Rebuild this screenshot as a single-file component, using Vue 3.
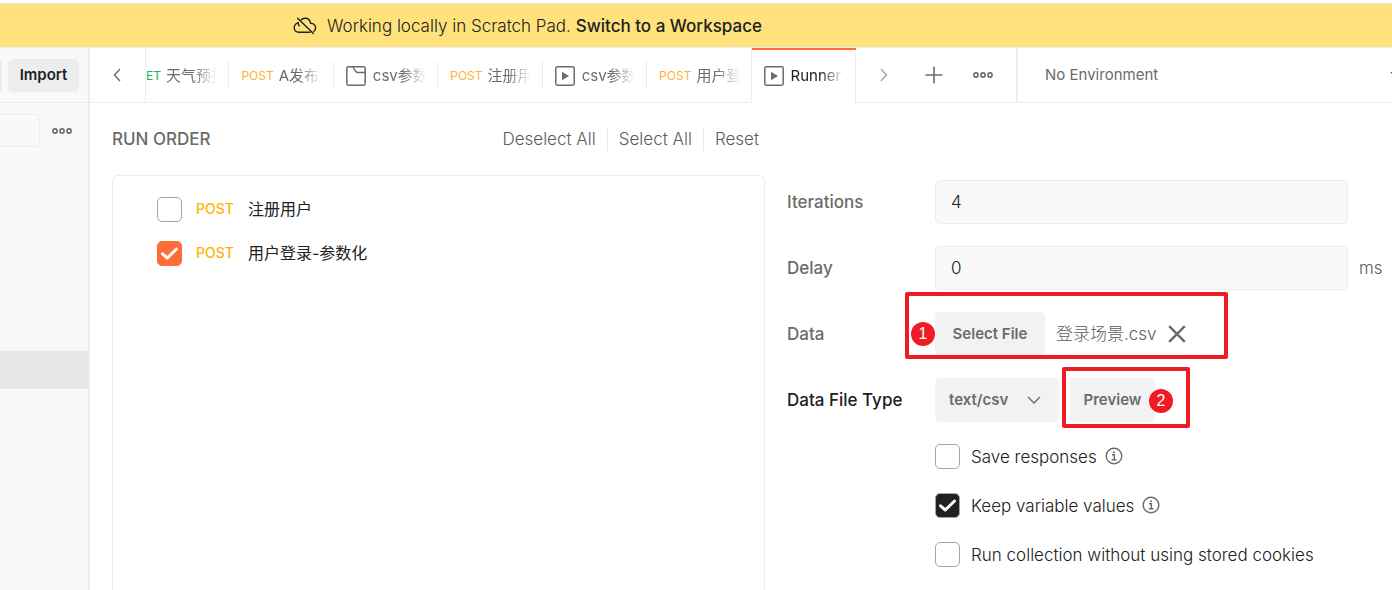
<script setup>
import { ref } from 'vue'

const tabs = [
  { method: 'GET', kind: 'get', name: '天气预报' },
  { method: 'POST', kind: 'post', name: 'A发布信' },
  { icon: 'folder', name: 'csv参数' },
  { method: 'POST', kind: 'post', name: '注册用' },
  { icon: 'runner', name: 'csv参数' },
  { method: 'POST', kind: 'post', name: '用户登' },
  { icon: 'runner', name: 'Runner', active: true },
]

const requests = ref([
  { id: 'register', name: '注册用户', checked: false },
  { id: 'login', name: '用户登录-参数化', checked: true },
])

const options = ref([
  { id: 'save', label: 'Save responses', checked: false, info: true },
  { id: 'keep', label: 'Keep variable values', checked: true, info: true },
  { id: 'cookies', label: 'Run collection without using stored cookies', checked: false, info: false },
])

const iterations = ref('4')
const delay = ref('0')
const fileType = ref('text/csv')
const environment = ref('No Environment')

function setAll(value) {
  requests.value.forEach((r) => { r.checked = value })
}
</script>

<template>
  <div class="app">
    <header class="banner">
      <svg class="cloud" width="24" height="18" viewBox="0 0 24 18" fill="none" stroke="#212121" stroke-width="1.4" stroke-linecap="round" stroke-linejoin="round">
        <path d="M5.2 5.6C2.9 6.400 1.200 8.300 1.200 10.800 1.200 13.400 3.200 15.200 5.600 15.200H17" />
        <path d="M7.800 3.200C8.800 1.800 10.400 1.200 12.200 1.200 15.300 1.200 17.200 3.200 17.500 6.200 20.400 6.300 22.600 8.200 22.600 10.900 22.600 12.300 22 13.500 21 14.300" />
        <path d="M5.200 5.600C5.200 7 5.500 8 6.200 8.700" />
        <path d="M4.600 1.200 20.400 16.500" />
      </svg>
      <p>Working locally in Scratch Pad. <a href="#">Switch to a Workspace</a></p>
    </header>

    <div class="body">
      <aside class="sidebar">
        <div class="side-head">
          <button class="side-btn cut" aria-label="New"></button>
          <button class="side-btn">Import</button>
        </div>
        <div class="side-search">
          <input type="text" aria-label="Search" />
          <button class="plain" aria-label="More">
            <svg width="20" height="8" viewBox="0 0 20 8" fill="none" stroke="#6b6b6b" stroke-width="1.6"><circle cx="3" cy="4" r="2.1" /><circle cx="10" cy="4" r="2.1" /><circle cx="17" cy="4" r="2.1" /></svg>
          </button>
        </div>
        <div class="side-selected"></div>
      </aside>

      <main class="main">
        <div class="tabbar">
          <button class="scroll-left" aria-label="Previous tabs">
            <svg width="8" height="14" viewBox="0 0 8 14" fill="none" stroke="#6b6b6b" stroke-width="1.4"><path d="M7 1 1.500 7 7 13" /></svg>
          </button>
          <div class="strip">
            <nav class="tabs">
              <button v-for="(t, i) in tabs" :key="i" class="tab" :class="{ active: t.active }">
                <span v-if="t.method" class="method" :class="t.kind">{{ t.method }}</span>
                <svg v-else-if="t.icon === 'folder'" class="tab-icon" width="20" height="20" viewBox="0 0 20 20" fill="none" stroke="#6b6b6b" stroke-width="1.5">
                  <rect x="0.8" y="0.8" width="18.400" height="18.400" rx="1.600" />
                  <path d="M6.800 1C8.800 2.500 8.800 6.600 12 6.600H19" />
                </svg>
                <svg v-else class="tab-icon" width="20" height="20" viewBox="0 0 20 20" fill="none">
                  <rect x="0.8" y="0.8" width="18.400" height="18.400" rx="1.600" stroke="#6b6b6b" stroke-width="1.5" />
                  <path d="M7 5.800V14.200L14 10Z" fill="#6b6b6b" />
                </svg>
                <span class="name">{{ t.name }}</span>
              </button>
            </nav>
          </div>
          <div class="tab-actions">
            <button class="plain" aria-label="Next tabs">
              <svg width="8" height="14" viewBox="0 0 8 14" fill="none" stroke="#a6a6a6" stroke-width="1.4"><path d="M1 1 6.500 7 1 13" /></svg>
            </button>
            <button class="plain new-tab" aria-label="New tab">
              <svg width="18" height="18" viewBox="0 0 18 18" fill="none" stroke="#6b6b6b" stroke-width="1.6"><path d="M9 0.500V17.500M0.500 9H17.500" /></svg>
            </button>
            <button class="plain" aria-label="Tab options">
              <svg width="20" height="8" viewBox="0 0 20 8" fill="none" stroke="#6b6b6b" stroke-width="1.6"><circle cx="3" cy="4" r="2.1" /><circle cx="10" cy="4" r="2.1" /><circle cx="17" cy="4" r="2.1" /></svg>
            </button>
          </div>
          <div class="env">
            <select v-model="environment" aria-label="Environment">
              <option>No Environment</option>
            </select>
            <svg width="12" height="8" viewBox="0 0 12 8" fill="#6b6b6b"><path d="M0 1H12L6 7Z" /></svg>
          </div>
        </div>

        <div class="content">
          <section class="order">
            <div class="order-head">
              <h2>RUN ORDER</h2>
              <div class="links">
                <button @click="setAll(false)">Deselect All</button>
                <button @click="setAll(true)">Select All</button>
                <button>Reset</button>
              </div>
            </div>
            <div class="order-list">
              <label v-for="r in requests" :key="r.id" class="request">
                <span class="check orange">
                  <input v-model="r.checked" type="checkbox" />
                  <svg width="25" height="25" viewBox="0 0 25 25" fill="none" stroke="#fff" stroke-width="3"><path d="M5.500 12.800 10.300 17 19.500 8" stroke-linecap="round" stroke-linejoin="round" /></svg>
                </span>
                <span class="verb">POST</span>
                <span class="request-name">{{ r.name }}</span>
              </label>
            </div>
          </section>

          <section class="settings">
            <div class="field">
              <label for="iterations">Iterations</label>
              <input id="iterations" v-model="iterations" type="text" />
              <span class="unit"></span>
            </div>
            <div class="field">
              <label for="delay">Delay</label>
              <input id="delay" v-model="delay" type="text" />
              <span class="unit">ms</span>
            </div>
            <div class="field">
              <label for="file">Data</label>
              <div class="control">
                <button id="file" class="gray select-file">Select File</button>
                <span class="filename">登录场景.csv</span>
                <button class="plain" aria-label="Remove file">
                  <svg width="18" height="18" viewBox="0 0 18 18" fill="none" stroke="#6b6b6b" stroke-width="2.400"><path d="M1.200 1.200 16.800 16.800M16.800 1.200 1.200 16.800" /></svg>
                </button>
                <span class="mark mark-one"></span>
                <span class="badge badge-one">1</span>
              </div>
            </div>
            <div class="field">
              <label for="type" class="strong">Data File Type</label>
              <div class="control">
                <div class="type">
                  <select id="type" v-model="fileType" class="gray">
                    <option>text/csv</option>
                  </select>
                  <svg width="14" height="8" viewBox="0 0 14 8" fill="none" stroke="#6b6b6b" stroke-width="1.400"><path d="M1 1 7 7 13 1" /></svg>
                </div>
                <button class="gray preview">Preview</button>
                <span class="mark mark-two"></span>
                <span class="badge badge-two">2</span>
              </div>
            </div>
            <div class="options">
              <div v-for="o in options" :key="o.id" class="option">
                <label>
                  <span class="check dark">
                    <input v-model="o.checked" type="checkbox" />
                    <svg width="25" height="25" viewBox="0 0 25 25" fill="none" stroke="#fff" stroke-width="3"><path d="M5.500 12.800 10.300 17 19.500 8" stroke-linecap="round" stroke-linejoin="round" /></svg>
                  </span>
                  <span>{{ o.label }}</span>
                </label>
                <svg v-if="o.info" class="info" width="18" height="18" viewBox="0 0 18 18" fill="none" stroke="#6b6b6b" stroke-width="1.400">
                  <circle cx="9" cy="9" r="7.800" />
                  <path d="M7 7.800H9.300V12.600M6.700 12.800H11.500" />
                  <circle cx="9" cy="5.200" r="1" fill="#6b6b6b" stroke="none" />
                </svg>
              </div>
            </div>
          </section>
        </div>
      </main>
    </div>
  </div>
</template>

<style>
body {
  margin: 0;
  overflow: hidden;
  background: #fff;
}
</style>

<style scoped>
.app {
  display: flex;
  flex-direction: column;
  height: 100vh;
  font-family: Inter, "Noto Sans CJK SC", sans-serif;
  font-size: 17px;
  font-weight: 300;
  line-height: 24px;
  color: #212121;
}
.app *, .app { box-sizing: border-box; }
button, input, select {
  margin: 0;
  padding: 0;
  border: 0;
  background: none;
  font: inherit;
  color: inherit;
  appearance: none;
}
svg { display: block; flex: none; }
p, h2 { margin: 0; }

.banner {
  display: flex;
  align-items: center;
  flex: none;
  gap: 10px;
  height: 45px;
  margin-top: 3px;
  padding-left: 293px;
  background: #ffe27c;
  border-top: 1px solid #e6e6e6;
  border-bottom: 1px solid #ededed;
}
.banner a { color: inherit; font-weight: 500; text-decoration: none; }

.body { display: flex; flex: 1; min-height: 0; }
.sidebar {
  flex: none;
  width: 90px;
  background: #f9f9f9;
  border-right: 2px solid #ededed;
}
.side-head {
  display: flex;
  align-items: center;
  gap: 6px;
  height: 55px;
  border-bottom: 1px solid #ededed;
}
.side-btn {
  height: 33px;
  width: 71px;
  border-radius: 5px;
  background: #ededed;
  font-size: 15px;
  font-weight: 600;
}
.side-btn.cut { width: 2px; border-radius: 0 5px 5px 0; }
.side-search {
  display: flex;
  align-items: center;
  gap: 12px;
  margin-top: 11px;
}
.side-search input {
  width: 40px;
  height: 33px;
  border: 1px solid #ededed;
  border-left: 0;
  border-radius: 0 4px 4px 0;
}
.side-selected {
  height: 38px;
  margin-top: 204px;
  background: #e6e6e6;
}

.main {
  display: flex;
  flex-direction: column;
  flex: 1;
  min-width: 0;
}
.tabbar { display: flex; flex: none; height: 55px; font-weight: 400; }
.scroll-left {
  display: flex;
  align-items: center;
  justify-content: center;
  flex: none;
  width: 56px;
  padding-right: 1px;
  border-right: 1px solid #ededed;
  border-bottom: 1px solid #ededed;
}
.strip {
  display: flex;
  justify-content: flex-end;
  flex: 0 1 710px;
  overflow: hidden;
}
.tabs { display: flex; flex: none; width: 731px; }
.tab {
  display: flex;
  align-items: center;
  flex: 1 1 0;
  min-width: 0;
  padding: 2px 12px 0 12px;
  border-bottom: 1px solid #ededed;
  background: linear-gradient(#ededed, #ededed) right center / 1px 28px no-repeat;
  font-size: 15px;
  color: #6b6b6b;
}
.tab:nth-last-child(2) { background-size: 1px 100%; }
.tab.active {
  padding-top: 0;
  padding-bottom: 1px;
  border-top: 2px solid #ff6c37;
  border-bottom: 0;
  background-size: 1px 100%;
  color: #212121;
}
.method { font-size: 12px; margin-right: 5px; }
.get { color: #0cbb52; }
.post { color: #ffb038; }
.tab-icon { margin-right: 7px; }
.name {
  flex: 1;
  min-width: 0;
  overflow: hidden;
  white-space: nowrap;
  text-align: left;
  mask-image: linear-gradient(to left, transparent, #000 24px);
}
.tab-actions {
  display: flex;
  align-items: center;
  justify-content: space-between;
  flex: none;
  width: 162px;
  padding: 0 23px 0 24px;
  border-right: 2px solid #ededed;
  border-bottom: 1px solid #ededed;
}
.new-tab { padding-left: 6px; }
.env {
  display: flex;
  align-items: center;
  flex: 1;
  min-width: 0;
  padding-left: 27px;
  overflow: hidden;
  border-bottom: 1px solid #ededed;
  color: #6b6b6b;
  font-size: 15px;
}
.env select { flex: 1; min-width: 0; }
.env svg { margin-right: -10px; }

.content {
  display: grid;
  grid-template-columns: minmax(0, 653fr) minmax(0, 605fr);
  column-gap: 22px;
  flex: 1;
  min-height: 0;
  padding-left: 22px;
}
.order { display: flex; flex-direction: column; min-height: 0; }
.order-head {
  display: flex;
  align-items: center;
  justify-content: space-between;
  flex: none;
  height: 72px;
  color: #6b6b6b;
}
h2 { font-size: 17px; font-weight: 500; }
.links { display: flex; padding-right: 6px; color: #5c5c5c; }
.links button + button {
  margin-left: 11px;
  padding-left: 11px;
  border-left: 1px solid #e6e6e6;
}
.order-list {
  display: flex;
  flex-direction: column;
  gap: 19px;
  flex: 1;
  padding: 21px 44px;
  border: 1px solid #ededed;
  border-bottom: 0;
  border-radius: 6px 6px 0 0;
}
.request { display: flex; align-items: flex-start; }
.request-name { font-size: 16px; font-weight: 400; }
.verb {
  margin: 0 14px;
  font-size: 14px;
  font-weight: 500;
  color: #ffb400;
}
.check { display: grid; flex: none; }
.check > * { grid-area: 1 / 1; }
.check input {
  width: 25px;
  height: 25px;
  border: 1px solid #a6a6a6;
  border-radius: 5px;
}
.check svg { visibility: hidden; pointer-events: none; }
.check input:checked + svg { visibility: visible; }
.orange input:checked { background: #ff6c37; border-color: #ff6c37; }
.dark input:checked { background: #212121; }

.settings { padding-top: 77px; }
.field {
  display: grid;
  grid-template-columns: 148px minmax(0, 1fr) 44px;
  align-items: center;
  margin-bottom: 22px;
}
.field > label { font-weight: 500; color: #6b6b6b; }
.field > label.strong { color: #212121; }
.field > input {
  width: 100%;
  height: 44px;
  padding: 0 15px;
  border: 1px solid #ededed;
  border-radius: 5px;
  background: #f9f9f9;
}
.unit { padding-left: 11px; color: #5c5c5c; }
.control {
  position: relative;
  display: flex;
  align-items: center;
  height: 44px;
  color: #6b6b6b;
}
.gray {
  height: 44px;
  border-radius: 5px;
  background: #f2f2f2;
  font-size: 15px;
  font-weight: 600;
}
.select-file { width: 110px; }
.filename { margin: 0 11px; color: #5c5c5c; }
.type { display: grid; align-items: center; width: 124px; margin-right: 11px; }
.type > * { grid-area: 1 / 1; }
.type select { width: 100%; padding-left: 14px; }
.type svg { justify-self: end; margin-right: 18px; pointer-events: none; }
.preview { width: 85px; }

.mark {
  position: absolute;
  border: 4px solid #ee1c25;
  border-radius: 2px;
  pointer-events: none;
}
.mark-one { left: -30px; top: -20px; width: 323px; height: 67px; }
.mark-two { left: 127px; top: -11px; width: 128px; height: 61px; }
.badge {
  position: absolute;
  width: 24px;
  height: 24px;
  border-radius: 50%;
  background: #ee1c25;
  color: #fff;
  font-family: "Liberation Sans", sans-serif;
  font-size: 16px;
  font-weight: 400;
  text-align: center;
}
.badge-one { left: -24px; top: 10px; }
.badge-two { left: 214px; top: 11px; }

.options {
  display: flex;
  flex-direction: column;
  gap: 24px;
  padding-left: 148px;
}
.option { display: flex; align-items: center; gap: 8px; }
.option label { display: flex; align-items: center; gap: 11px; }
.info { margin-bottom: 2px; }
</style>
